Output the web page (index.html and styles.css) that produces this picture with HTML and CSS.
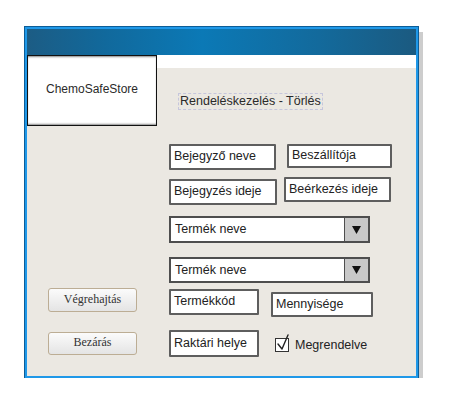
FILE: index.html
```html
<!DOCTYPE html>
<html lang="hu">
<head>
<meta charset="utf-8">
<title>ChemoSafeStore - Rendeléskezelés</title>
<link rel="stylesheet" href="styles.css">
</head>
<body>
<div class="window">
  <div class="titlebar"></div>
  <div class="body">
    <div class="top">
      <div class="logo">ChemoSafeStore</div>
      <div class="top-right">
        <div class="strip"></div>
        <div class="heading">Rendeléskezelés - Törlés</div>
      </div>
    </div>
    <div class="form">
      <div class="row row1">
        <div class="field f-a1">Bejegyző neve</div>
        <div class="field f-b1">Beszállítója</div>
      </div>
      <div class="row row2">
        <div class="field f-a2">Bejegyzés ideje</div>
        <div class="field f-b2">Beérkezés ideje</div>
      </div>
      <div class="row combo-row c1">
        <div class="combo"><span class="combo-text">Termék neve</span><span class="combo-btn"><svg width="9" height="8" viewBox="0 0 9 8"><path d="M0 0 H9 L4.5 8 Z" fill="#111"/></svg></span></div>
      </div>
      <div class="row combo-row c2">
        <div class="combo"><span class="combo-text">Termék neve</span><span class="combo-btn"><svg width="9" height="8" viewBox="0 0 9 8"><path d="M0 0 H9 L4.5 8 Z" fill="#111"/></svg></span></div>
      </div>
      <div class="row row5">
        <button class="btn btn-exec">Végrehajtás</button>
        <div class="field f-kod">Termékkód</div>
        <div class="field f-menny">Mennyisége</div>
      </div>
      <div class="row row6">
        <button class="btn btn-close">Bezárás</button>
        <div class="field f-hely">Raktári helye</div>
        <label class="check">
          <span class="box"><svg width="16" height="20" viewBox="0 0 16 20"><path d="M3 11 L7 16 L13 2" fill="none" stroke="#222" stroke-width="1.4" stroke-linecap="round" stroke-linejoin="round"/></svg></span>
          <span class="check-label">Megrendelve</span>
        </label>
      </div>
    </div>
  </div>
</div>
</body>
</html>
```
FILE: styles.css
```css
* { box-sizing: border-box; }
html, body { margin: 0; padding: 0; background: #ffffff; }
body { font-family: "Liberation Sans", Arial, sans-serif; }

.window {
  margin: 27px 0 0 25px;
  width: 393px;
  height: 351px;
  border: 2px solid #1f98e8;
  outline: 1px solid #0d5d96;
  box-shadow: 5px 5px 0 #cdcdcd;
  background: #ebe8e2;
  display: flex;
  flex-direction: column;
}

.titlebar {
  height: 26px;
  background: linear-gradient(90deg, #1c5c84 0%, #11699c 20%, #0b79b6 45%, #136a9c 75%, #1b5a80 100%);
  flex: none;
}

.body { flex: 1; display: flex; flex-direction: column; }

.top { display: flex; height: 71px; }

.logo {
  width: 130px;
  height: 71px;
  background: #fff;
  border: 1px solid #111;
  box-shadow: inset 0 2px 2px -1px #8a8a8a, inset 0 -2px 2px -1px #8a8a8a;
  display: flex;
  align-items: center;
  justify-content: center;
  font-size: 12px;
  color: #2a2a2a;
  padding-bottom: 4px;
}

.top-right { flex: 1; display: flex; flex-direction: column; }
.strip { height: 13px; background: #fff; }

.heading {
  align-self: flex-start;
  margin: 25px 0 0 21px;
  height: 17px;
  padding: 0 1px;
  border: 1px dashed #c6c6dc;
  font-size: 12.5px;
  line-height: 15px;
  color: #2a2a2a;
  white-space: nowrap;
}

.form { display: flex; flex-direction: column; }

.row { display: flex; align-items: flex-start; }

.field {
  background: #fff;
  border: 2px solid #5e5e5e;
  border-radius: 1px;
  font-size: 12.5px;
  color: #222;
  padding: 0 0 0 3px;
  display: flex;
  align-items: center;
  white-space: nowrap;
  padding-bottom: 2px;
}

.row1 { margin: 18px 0 0 142px; }
.f-a1 { width: 107px; height: 26px; }
.f-b1 { width: 105px; height: 24px; margin-left: 11px; }

.row2 { margin: 7px 0 0 142px; }
.f-a2 { width: 108px; height: 26px; margin-top: 2px; }
.f-b2 { width: 107px; height: 25px; margin-left: 7px; }

.combo-row { margin-left: 142px; }
.c1 { margin-top: 11px; }
.c2 { margin-top: 14px; }
.combo {
  width: 201px;
  height: 27px;
  border: 2px solid #4e4e4e;
  background: #fff;
  display: flex;
  font-size: 12.5px;
  color: #222;
}
.c2 .combo { height: 26px; }
.combo-text { flex: 1; display: flex; align-items: center; padding-left: 4px; padding-bottom: 1px; }
.combo-btn {
  width: 24px;
  background: #c8c8c8;
  border-left: 1px solid #4e4e4e;
  display: flex;
  align-items: center;
  justify-content: center;
}

.row5 { margin: 5px 0 0 21px; }
.btn {
  font-family: "Liberation Serif", "Times New Roman", serif;
  font-size: 12px;
  color: #333;
  background: linear-gradient(#fbfbfb, #e4e4e4);
  border: 1px solid #bcad94;
  border-radius: 3px;
  width: 89px;
  padding: 0 0 2px;
  margin: 0;
}
.btn-exec { height: 24px; }
.f-kod { width: 90px; height: 26px; margin: 1px 0 0 32px; }
.f-menny { width: 102px; height: 25px; margin: 4px 0 0 12px; }

.row6 { margin: 13px 0 0 21px; }
.btn-close { height: 23px; margin-top: 2px; }
.f-hely { width: 90px; height: 27px; margin-left: 32px; }

.check {
  display: flex;
  align-items: flex-end;
  margin: 8px 0 0 16px;
  font-size: 12.5px;
  color: #222;
}
.box {
  position: relative;
  width: 14px;
  height: 14px;
  border: 1.5px solid #333;
  background: #fff;
}
.box svg { position: absolute; left: -1px; top: -6px; }
.check-label { margin-left: 6px; line-height: 14px; }
```
